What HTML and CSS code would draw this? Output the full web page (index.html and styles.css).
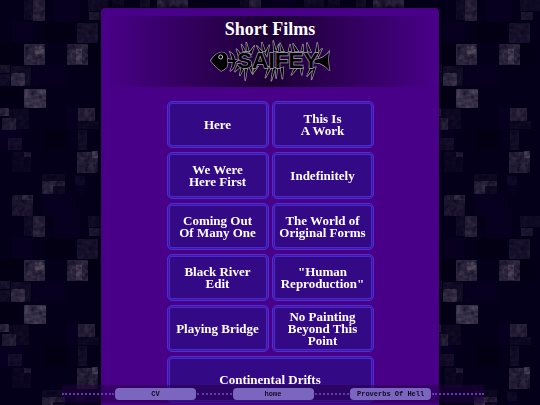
FILE: index.html
```html
<!DOCTYPE html>
<html lang="en">
<head>
    <meta charset="UTF-8">
    <meta name="viewport" content="width=device-width, initial-scale=1.0">
    <title>Short Films</title>
    <link rel="stylesheet" href="styles.css">
</head>
<body>
    <svg class="backdrop" aria-hidden="true">
        <defs>
            <filter id="worn" x="0" y="0" width="100%" height="100%">
                <feTurbulence type="fractalNoise" baseFrequency="0.2" numOctaves="3" seed="4" result="noise"/>
                <feColorMatrix in="noise" type="matrix" values="0 0 0 0 0  0 0 0 0 0  0 0 0 0 0  1 0 0 0 0.1" result="mask"/>
                <feComposite in="SourceGraphic" in2="mask" operator="in"/>
            </filter>
            <pattern id="blocks" width="216" height="216" patternUnits="userSpaceOnUse">
                <rect width="216" height="216" fill="#04001a"/>
                <g fill="#07011f">
                    <rect x="12" y="22" width="20" height="20"/>
                    <rect x="54" y="0" width="26" height="22"/>
                    <rect x="33" y="65" width="32" height="21"/>
                    <rect x="66" y="108" width="12" height="21"/>
                    <rect x="0" y="129" width="22" height="22"/>
                    <rect x="76" y="173" width="9" height="21"/>
                    <rect x="43" y="194" width="33" height="22"/>
                </g>
                <g fill="#030014">
                    <rect x="0" y="43" width="23" height="22"/>
                    <rect x="0" y="87" width="23" height="20"/>
                    <rect x="45" y="130" width="22" height="20"/>
                    <rect x="45" y="22" width="30" height="20"/>
                    <rect x="88" y="43" width="15" height="21"/>
                </g>
                <g fill="#4c4257" filter="url(#worn)">
                    <rect x="24" y="0" width="9" height="20" rx="1" opacity=".25"/>
                    <rect x="33" y="0" width="12" height="21" rx="1" opacity=".75"/>
                    <rect x="77" y="23" width="21" height="20" rx="1" opacity=".4"/>
                    <rect x="24" y="44" width="21" height="21" rx="1" opacity=".9"/>
                    <rect x="35" y="46" width="9" height="8" fill="#665c6e"/>
                    <rect x="67" y="44" width="21" height="21" rx="1" opacity=".8"/>
                    <rect x="76" y="49" width="6" height="15" fill="#665c6e"/>
                    <rect x="0" y="65" width="10" height="8" opacity=".4"/>
                    <rect x="0" y="74" width="10" height="12" opacity=".25"/>
                    <rect x="11" y="73" width="14" height="13" rx="1" opacity=".9"/>
                    <rect x="11" y="66" width="20" height="20" rx="1" opacity=".3"/>
                    <rect x="24" y="89" width="22" height="19" rx="1" fill="#544b60"/>
                    <rect x="88" y="0" width="20" height="11" opacity=".25"/>
                    <rect x="89" y="12" width="12" height="8" opacity=".5"/>
                    <rect x="0" y="108" width="9" height="8" rx="1" opacity=".8"/>
                    <rect x="2" y="118" width="14" height="12" rx="1" opacity=".6"/>
                    <rect x="9" y="109" width="20" height="20" rx="1" opacity=".2"/>
                    <rect x="78" y="108" width="17" height="13" rx="1" opacity=".75"/>
                    <rect x="78" y="121" width="21" height="8" opacity=".2"/>
                    <rect x="8" y="138" width="14" height="12" opacity=".3"/>
                    <rect x="78" y="130" width="9" height="20" opacity=".3"/>
                    <rect x="12" y="152" width="19" height="20" opacity=".15"/>
                    <rect x="24" y="152" width="7" height="5" opacity=".5"/>
                    <rect x="77" y="152" width="21" height="21" rx="1" opacity=".7"/>
                    <rect x="92" y="151" width="6" height="7" fill="#665c6e"/>
                    <rect x="42" y="181" width="11" height="13" rx="1" opacity=".7"/>
                    <rect x="53" y="181" width="12" height="5" opacity=".7"/>
                    <rect x="42" y="174" width="23" height="20" rx="1" opacity=".2"/>
                    <rect x="75" y="176" width="10" height="9" opacity=".15"/>
                    <rect x="12" y="195" width="21" height="21" rx="1" opacity=".5"/>
                    <rect x="22" y="195" width="11" height="5" opacity=".7"/>
                    <rect x="157" y="0" width="31" height="16" opacity=".7"/>
                    <rect x="112" y="0" width="12" height="10" opacity=".2"/>
                    <rect x="140" y="0" width="10" height="20" opacity=".3"/>
                </g>
            </pattern>
        </defs>
        <rect width="100%" height="100%" fill="url(#blocks)"/>
    </svg>

    <main class="container">
        <header class="banner">
            <h1>Short Films</h1>
            <svg class="logo" viewBox="24 72 364 126" role="img" aria-label="Saifey">
                <g class="ink">
                    <path d="M26 134 Q40 112 58 109 Q72 108 76 122 Q80 140 74 154 Q66 162 58 165 Q44 156 26 134Z"/>
                    <path d="M78 129 L92 131 L84 108 Q98 116 99 131 L108 133 L99 139 Q99 155 84 166 Q93 151 92 138 L78 138Z"/>
                    <path d="M338 132 L354 128 Q368 124 382 108 Q377 134 384 164 Q370 148 354 142 L338 140Z"/>
                </g>
                <!-- jagged drips hanging off the letters -->
                <g class="ink">
                    <path d="M124 106 L118 84 L131 106Z M134 106 L133 78 L141 106Z M142 110 L158 88 L149 114Z M110 120 L103 98 L116 114Z"/>
                    <path d="M106 148 L98 168 L115 153Z M118 154 L113 180 L126 156Z M128 156 L130 194 L136 156Z M142 152 L153 176 L149 146Z"/>
                    <path d="M176 112 L164 88 L182 108Z M182 106 L180 78 L190 106Z M190 112 L203 86 L195 120Z"/>
                    <path d="M158 150 L153 172 L168 152Z M200 152 L190 187 L208 154Z"/>
                    <path d="M216 106 L214 73 L223 106Z M223 106 L231 84 L228 106Z M214 154 L208 196 L221 156Z M221 156 L223 188 L227 154Z"/>
                    <path d="M238 106 L234 80 L246 106Z M260 106 L265 84 L268 106Z M236 156 L242 190 L245 154Z"/>
                    <path d="M280 106 L273 82 L290 106Z M298 106 L304 84 L304 106Z"/>
                    <path d="M278 156 L268 178 L287 156Z M296 156 L300 178 L304 156Z"/>
                    <path d="M318 106 L315 79 L328 108Z M342 108 L347 79 L350 108Z M346 114 L362 97 L350 122Z"/>
                    <path d="M328 154 L315 182 L335 158Z M334 156 L329 192 L342 154Z"/>
                </g>
                <text class="name" x="228" y="156" text-anchor="middle">SAIFEY</text>
                <circle class="eye" cx="56" cy="123" r="6"/>
            </svg>
        </header>

        <nav class="films" aria-label="Short Films">
            <a href="#">Here</a>
            <a href="#">This Is<br>A Work</a>
            <a href="#">We Were<br>Here First</a>
            <a href="#">Indefinitely</a>
            <a href="#">Coming Out<br>Of Many One</a>
            <a href="#">The World of<br>Original Forms</a>
            <a href="#">Black River<br>Edit</a>
            <a href="#">"Human<br>Reproduction"</a>
            <a href="#">Playing Bridge</a>
            <a href="#">No Painting<br>Beyond This<br>Point</a>
            <a href="#" class="wide">Continental Drifts</a>
        </nav>
    </main>

    <footer class="bottom-nav">
        <span class="dots end"></span>
        <a href="#">CV</a>
        <span class="dots"></span>
        <a href="#">home</a>
        <span class="dots"></span>
        <a href="#">Proverbs Of Hell</a>
        <span class="dots end"></span>
    </footer>
</body>
</html>
```

FILE: styles.css
```css
* {
    box-sizing: border-box;
}

html {
    height: 100%;
    overflow: hidden;
}

body {
    margin: 0;
    height: 100%;
    padding-top: 8px;
    overflow: hidden;
    background-color: #04001a;
    font-family: "Liberation Serif", serif;
}

.backdrop {
    position: fixed;
    top: 0;
    left: 0;
    width: 100%;
    height: 100%;
    z-index: -1;
}

.container {
    min-height: 100%;
    margin: 0 101px;
    padding: 8px 4px;
    background-color: #480088;
    border-radius: 4px;
    box-shadow: 0 0 4px #000;
}

.banner {
    display: flex;
    flex-direction: column;
    align-items: center;
    padding: 2px 0 5px;
    background: linear-gradient(to right, #480088, #1c0034 50%, #480088);
}

h1 {
    margin: 0;
    font-size: 18px;
    line-height: 22px;
    color: #fff;
}

.logo {
    width: 121px;
    height: 42px;
}

.ink,
.name {
    fill: #000;
    stroke: #a8a0ae;
    stroke-width: 4px;
    paint-order: stroke;
}

.name {
    font-family: "Liberation Sans", sans-serif;
    font-size: 68px;
    font-weight: bold;
}

.eye {
    fill: #000;
    stroke: #c8c0cc;
    stroke-width: 3px;
}

.films {
    display: grid;
    grid-template-columns: 102px 102px;
    grid-auto-rows: 47px;
    gap: 4px 3px;
    justify-content: center;
    margin-top: 14px;
}

.films a {
    display: flex;
    justify-content: center;
    align-items: center;
    text-align: center;
    background-color: #340985;
    border: 1px solid #4d2fd0;
    border-radius: 5px;
    box-shadow: inset 0 0 0 1px #3f17a8, inset 0 0 0 2px #4a29c6;
    color: #fff;
    font-size: 13px;
    font-weight: bold;
    line-height: 12px;
    text-decoration: none;
    white-space: nowrap;
}

.films .wide {
    grid-column: span 2;
}

.bottom-nav {
    position: fixed;
    left: 62px;
    right: 56px;
    bottom: 2px;
    display: flex;
    align-items: center;
    gap: 1px;
    padding: 3px 0;
    background-color: rgba(36, 0, 68, 0.5);
}

.bottom-nav a {
    flex: 0 0 81px;
    background-color: #7b66bf;
    border-radius: 4px;
    color: #130822;
    font-family: "Liberation Mono", monospace;
    font-size: 7px;
    font-weight: bold;
    line-height: 12px;
    text-align: center;
    text-decoration: none;
}

.dots {
    flex: 2;
    border-top: 2px dotted #5b3cb2;
}

.dots.end {
    flex: 3;
}

.films a:hover,
.bottom-nav a:hover {
    color: #c9b8ff;
}
```
